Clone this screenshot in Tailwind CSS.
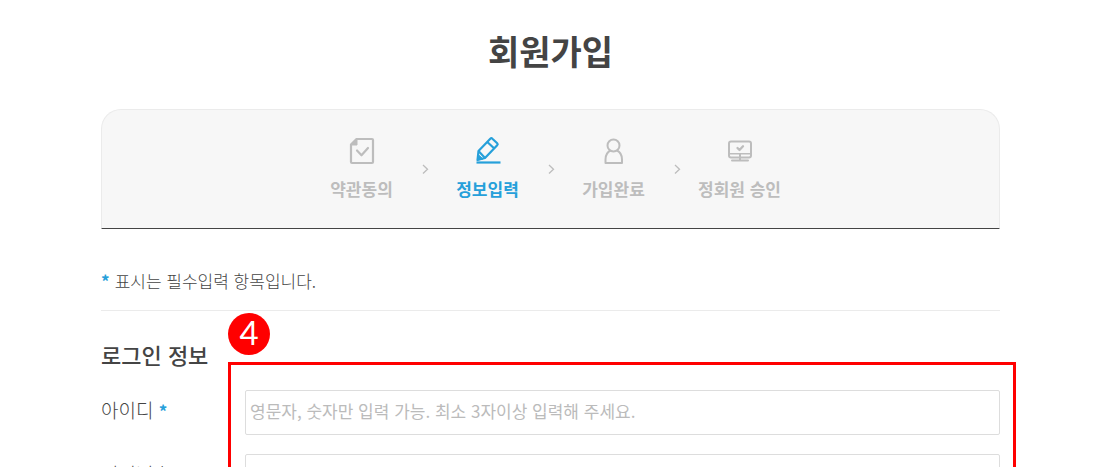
<!DOCTYPE html>
<html lang="ko">
<head>
    <meta charset="utf-8">
    <meta name="viewport" content="width=device-width, initial-scale=1">
    <title>회원가입</title>
    <script src="https://cdn.jsdelivr.net/npm/@tailwindcss/browser@4"></script>
</head>
<body class="h-screen overflow-hidden bg-white text-[#444] font-['Noto_Sans_CJK_KR',sans-serif]">
    <main class="mx-auto max-w-[900px] pl-px">
        <h1 class="pt-[27px] text-center text-[34px] leading-[48px] font-bold">회원가입</h1>

        <!-- sign-up steps -->
        <ol class="mt-[34px] flex h-[120px] justify-center rounded-t-[20px] border border-[#ebebeb] border-b-[#444] bg-[#f7f7f7] pt-6 text-[17px] leading-6 font-bold text-[#bdbdbd]">
            <li class="relative flex w-[126px] flex-col items-center gap-[11px]">
                <svg class="h-8 w-8" viewBox="0 0 32 32" fill="none" stroke="currentColor" stroke-width="2.200" stroke-linejoin="round" stroke-linecap="round">
                    <path d="M10.500 5H26a1 1 0 0 1 1 1v22a1 1 0 0 1-1 1H6a1 1 0 0 1-1-1V10.500z"/>
                    <path d="M11 5v6H5z" fill="currentColor" stroke-width="1"/>
                    <path d="M11 16.500l4.500 4.800L22 14"/>
                </svg>
                <span>약관동의</span>
                <svg class="absolute top-[29px] -right-[6px] h-3 w-3" viewBox="0 0 12 12" fill="none" stroke="currentColor" stroke-width="1.300"><path d="M4 2l4.500 4.300L4 10.500"/></svg>
            </li>
            <li class="relative flex w-[126px] flex-col items-center gap-[11px] text-[#26a0da]" aria-current="step">
                <svg class="h-8 w-8" viewBox="0 0 32 32" fill="none" stroke="currentColor" stroke-width="2.200" stroke-linejoin="round">
                    <path d="M5.500 26L6.500 17 18.300 4.700a1.500 1.500 0 0 1 2.100 0l4.800 4.500a1.500 1.500 0 0 1 0 2.100L13 24z"/>
                    <path d="M15.300 8l7 6.500M6.500 17l6.500 7"/>
                    <path d="M5.500 26l.6-5.500 4.900 4.500z" fill="currentColor" stroke-width="1"/>
                    <path d="M4.500 28.500h24"/>
                </svg>
                <span>정보입력</span>
                <svg class="absolute top-[29px] -right-[6px] h-3 w-3 text-[#bdbdbd]" viewBox="0 0 12 12" fill="none" stroke="currentColor" stroke-width="1.300"><path d="M4 2l4.500 4.300L4 10.500"/></svg>
            </li>
            <li class="relative flex w-[126px] flex-col items-center gap-[11px]">
                <svg class="h-8 w-8" viewBox="0 0 32 32" fill="none" stroke="currentColor" stroke-width="2" stroke-linejoin="round">
                    <circle cx="15.500" cy="11.500" r="6"/>
                    <path d="M12.500 16.500C9.500 18 7.500 21.500 7.500 25.500V29h16.500v-3.500c0-4-2-7.500-5-9"/>
                </svg>
                <span>가입완료</span>
                <svg class="absolute top-[29px] -right-[6px] h-3 w-3" viewBox="0 0 12 12" fill="none" stroke="currentColor" stroke-width="1.300"><path d="M4 2l4.500 4.300L4 10.500"/></svg>
            </li>
            <li class="relative flex w-[126px] flex-col items-center gap-[11px]">
                <svg class="h-8 w-8" viewBox="0 0 32 32" fill="none" stroke="currentColor" stroke-width="2" stroke-linejoin="round" stroke-linecap="round">
                    <rect x="5" y="7.500" width="22" height="16" rx="2"/>
                    <path d="M5 19.800h22" stroke-width="1.500"/>
                    <path d="M16 20v6.500M8 26.500h16"/>
                    <path d="M13.500 14l2 2 3.500-3.700" stroke-width="2.300"/>
                </svg>
                <span>정회원 승인</span>
            </li>
        </ol>

        <p class="mt-10 border-b border-[#ebebeb] pb-[17px] text-[17px] leading-6 font-light"><span class="mr-[5px] font-bold text-[#26a0da]">*</span>표시는 필수입력 항목입니다.</p>

        <form>
            <h2 class="mt-[27px] text-[22px] leading-8 font-medium">로그인 정보</h2>

            <div class="relative mt-5 grid grid-cols-[144px_1fr] items-center gap-y-[19px] text-[17px]">
                <label for="user-id" class="pb-1 text-[19px] leading-6 font-light">아이디 <span class="text-[17px] font-bold text-[#26a0da]">*</span></label>
                <input id="user-id" type="text" placeholder="영문자, 숫자만 입력 가능. 최소 3자이상 입력해 주세요." class="h-[45px] rounded-[2px] border border-[#ddd] px-1 pb-1 placeholder:text-[#bbb]">
                <label for="user-pw" class="pb-1 text-[19px] leading-6 font-light">비밀번호 <span class="text-[17px] font-bold text-[#26a0da]">*</span></label>
                <input id="user-pw" type="password" class="h-[45px] rounded-[2px] border border-[#ddd] px-1">

                <!-- callout for the input column -->
                <div class="pointer-events-none absolute -top-7 -right-4 -bottom-7 left-[127px] border-3 border-[red]"></div>
                <span class="absolute -top-[77px] left-[127px] flex h-[42px] w-[42px] items-center justify-center rounded-full bg-[red] pb-1 text-[33px] leading-none text-white font-['Lato',sans-serif]">4</span>
            </div>
        </form>
    </main>
</body>
</html>
